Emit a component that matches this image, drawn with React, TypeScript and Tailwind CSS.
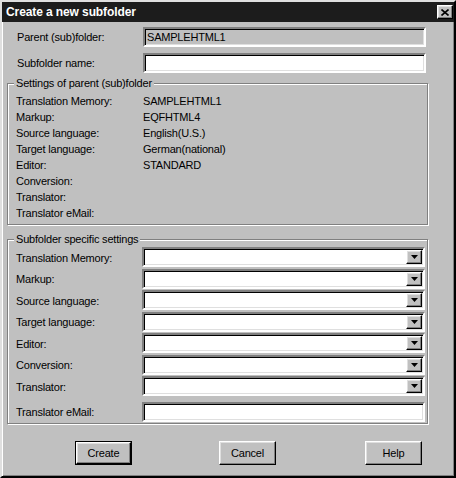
import React from "react";

const parentSettings = [
  { label: "Translation Memory:", value: "SAMPLEHTML1" },
  { label: "Markup:", value: "EQFHTML4" },
  { label: "Source language:", value: "English(U.S.)" },
  { label: "Target language:", value: "German(national)" },
  { label: "Editor:", value: "STANDARD" },
  { label: "Conversion:", value: "" },
  { label: "Translator:", value: "" },
  { label: "Translator eMail:", value: "" },
];

const comboRows = [
  "Translation Memory:",
  "Markup:",
  "Source language:",
  "Target language:",
  "Editor:",
  "Conversion:",
  "Translator:",
];

const sunken =
  "border-2 border-t-[#808080] border-l-[#808080] border-b-white border-r-white shadow-[inset_1px_1px_0_#000,inset_-1px_-1px_0_#dfdfdf]";

const raised =
  "bg-[#c0c0c0] border border-t-white border-l-white border-b-black border-r-black shadow-[inset_-1px_-1px_0_#808080,inset_1px_1px_0_#dfdfdf]";

function GroupBox({ title, className, children }: { title: string; className: string; children: React.ReactNode }) {
  return (
    <div
      className={`relative ml-[5px] w-[421px] border border-[#808080] shadow-[1px_1px_0_#fff,inset_1px_1px_0_#fff] ${className}`}
    >
      <span className="absolute left-[6px] top-[-8px] bg-[#c0c0c0] px-[2px] leading-[14px]">{title}</span>
      {children}
    </div>
  );
}

function Combo() {
  return (
    <div className={`flex h-[20px] w-[283px] justify-end bg-white ${sunken}`}>
      <div className={`m-[1px] flex w-[16px] items-center justify-center ${raised}`}>
        <svg width="7" height="4" viewBox="0 0 7 4">
          <path d="M0 0h7L3.5 4z" fill="#000" />
        </svg>
      </div>
    </div>
  );
}

function Button({ label, isDefault }: { label: string; isDefault?: boolean }) {
  return (
    <div className={`h-[24px] w-[57px] ${isDefault ? "border border-black" : ""}`}>
      <div className={`flex h-full w-full items-center justify-center ${raised}`}>{label}</div>
    </div>
  );
}

export default function App() {
  return (
    <div className="h-[478px] w-[456px] border-2 border-t-[#dfdfdf] border-l-[#dfdfdf] border-b-black border-r-black bg-[#c0c0c0] font-['Liberation_Sans',Arial,sans-serif] text-[11px] tracking-[-0.2px] text-black shadow-[inset_1px_1px_0_#fff,inset_-1px_-1px_0_#808080]">
      <div className="flex h-[20px] items-center justify-between bg-[#1c1c1c] pl-[4px] pr-[1px]">
        <span className="text-[12px] font-bold tracking-[-0.1px] text-white">Create a new subfolder</span>
        <div className={`flex h-[14px] w-[16px] items-center justify-center ${raised}`}>
          <svg width="8" height="7" viewBox="0 0 8 7">
            <path d="M0.5 0.5L7.5 6.5M7.5 0.5L0.5 6.5" stroke="#000" strokeWidth="1.6" />
          </svg>
        </div>
      </div>

      <div className="mt-[5px] flex h-[20px] items-center">
        <span className="w-[141px] pl-[15px]">Parent (sub)folder:</span>
        <div className={`flex h-[20px] w-[283px] items-center bg-[#c0c0c0] pl-[2px] ${sunken}`}>SAMPLEHTML1</div>
      </div>
      <div className="mt-[6px] flex h-[20px] items-center">
        <span className="w-[141px] pl-[15px]">Subfolder name:</span>
        <div className={`h-[20px] w-[283px] bg-white ${sunken}`} />
      </div>

      <GroupBox title="Settings of parent (sub)folder" className="mt-[10px] h-[142px] pl-[8px] pt-[9px]">
        <div className="flex flex-col">
          {parentSettings.map((row) => (
            <div key={row.label} className="flex h-[16px] items-center">
              <span className="w-[127px]">{row.label}</span>
              <span>{row.value}</span>
            </div>
          ))}
        </div>
      </GroupBox>

      <GroupBox title="Subfolder specific settings" className="mt-[14px] h-[185px] pl-[8px] pt-[7px]">
        <div className="flex flex-col gap-[1.5px]">
          {comboRows.map((label) => (
            <div key={label} className="flex h-[20px] items-center">
              <span className="w-[126px] pt-[2px]">{label}</span>
              <Combo />
            </div>
          ))}
          <div className="mt-[4px] flex h-[20px] items-center">
            <span className="w-[126px] pt-[2px]">Translator eMail:</span>
            <div className={`h-[20px] w-[283px] bg-white ${sunken}`} />
          </div>
        </div>
      </GroupBox>

      <div className="mt-[17px] flex pl-[73px]">
        <Button label="Create" isDefault />
        <div className="ml-[87px]">
          <Button label="Cancel" />
        </div>
        <div className="ml-[89px]">
          <Button label="Help" />
        </div>
      </div>
    </div>
  );
}
